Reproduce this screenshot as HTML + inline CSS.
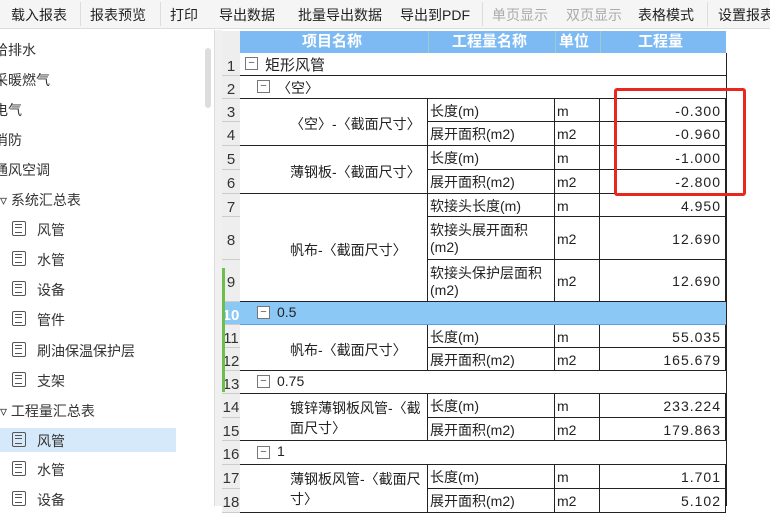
<!DOCTYPE html><html><head><meta charset="utf-8"><style>
*{margin:0;padding:0;box-sizing:border-box}
body{width:770px;height:506px;overflow:hidden;background:#fff;font-family:"Liberation Sans","Noto Sans CJK SC",sans-serif;font-size:14px;color:#222;position:relative}
.a{position:absolute;white-space:nowrap}
.tb{left:0;top:0;width:770px;height:29px;background:#f5f5f5;border-bottom:1px solid #ddd}
.tb span{position:absolute;top:5px;font-size:14px}
.sep{position:absolute;top:2px;width:1px;height:24px;background:#ddd}
.li{position:absolute;font-size:14px;color:#333}
.ic{position:absolute;width:14px;height:15px;border:1.5px solid #555;border-radius:2px}
.ic:after{content:"";position:absolute;left:2px;top:2px;width:7px;height:7px;border-top:1px solid #555;border-bottom:1px solid #555}
.ic:before{content:"";position:absolute;left:2px;top:5px;width:7px;border-top:1px solid #555}
.c{position:absolute;border-right:1px solid #222;border-bottom:1px solid #222;padding-left:2px;font-size:14px;line-height:1.2;overflow:hidden;display:flex;align-items:center;padding-top:2px}
.rn{position:absolute;left:222px;width:18px;background:#eee;border-bottom:1px solid #ccc;text-align:center;font-size:15px;color:#333;padding-top:2px}
.box{position:absolute;width:13px;height:13px;border:1px solid #777;background:#fff;font-size:11px;line-height:10px;text-align:center;color:#555}
.r{justify-content:flex-end;padding-right:4px;letter-spacing:1px}
</style></head><body>
<div class="a tb">
<span style="left:11px">载入报表</span><div class="sep" style="left:80px"></div>
<span style="left:90px">报表预览</span><div class="sep" style="left:160px"></div>
<span style="left:170px">打印</span>
<span style="left:219px">导出数据</span>
<span style="left:298px">批量导出数据</span>
<span style="left:400px">导出到PDF</span><div class="sep" style="left:482px"></div>
<span style="left:492px;color:#aaa">单页显示</span>
<span style="left:566px;color:#aaa">双页显示</span>
<span style="left:638px">表格模式</span><div class="sep" style="left:707px"></div>
<span style="left:718px">设置报表</span>
</div>
<div class="a" style="left:205px;top:48px;width:6px;height:60px;background:#ddd;border-radius:3px"></div>
<div class="a" style="left:214px;top:30px;width:8px;height:476px;background:#f0f0f0;border-left:1px solid #ddd"></div>
<div class="li" style="left:-6px;top:40px">给排水</div>
<div class="li" style="left:-6px;top:70px">采暖燃气</div>
<div class="li" style="left:-6px;top:100px">电气</div>
<div class="li" style="left:-6px;top:130px">消防</div>
<div class="li" style="left:-6px;top:160px">通风空调</div>
<div class="li" style="left:0;top:190px">▿ 系统汇总表</div>
<div class="a" style="left:0;top:428px;width:176px;height:24px;background:#d6e9fb"></div>
<div class="ic" style="left:12px;top:221px"></div><div class="li" style="left:37px;top:220px">风管</div>
<div class="ic" style="left:12px;top:251px"></div><div class="li" style="left:37px;top:250px">水管</div>
<div class="ic" style="left:12px;top:281px"></div><div class="li" style="left:37px;top:280px">设备</div>
<div class="ic" style="left:12px;top:311px"></div><div class="li" style="left:37px;top:310px">管件</div>
<div class="ic" style="left:12px;top:342px"></div><div class="li" style="left:37px;top:341px">刷油保温保护层</div>
<div class="ic" style="left:12px;top:372px"></div><div class="li" style="left:37px;top:371px">支架</div>
<div class="li" style="left:0;top:401px">▿ 工程量汇总表</div>
<div class="ic" style="left:12px;top:432px"></div><div class="li" style="left:37px;top:431px">风管</div>
<div class="ic" style="left:12px;top:461px"></div><div class="li" style="left:37px;top:460px">水管</div>
<div class="ic" style="left:12px;top:491px"></div><div class="li" style="left:37px;top:490px">设备</div>

<div class="a" style="left:222px;top:31px;width:18px;height:22px;background:#eee"></div>
<div class="a" style="left:240px;top:31px;width:486px;height:22px;background:#7db9f2;color:#fff;font-weight:bold;font-size:15px;line-height:22px">
<span class="a" style="left:62px">项目名称</span><span class="a" style="left:212px">工程量名称</span><span class="a" style="left:319px">单位</span><span class="a" style="left:398px">工程量</span>
<div class="a" style="left:188px;top:0;width:1px;height:22px;background:#9cc"></div><div class="a" style="left:315px;width:1px;height:22px;background:#9cc"></div><div class="a" style="left:360px;width:1px;height:22px;background:#9cc"></div>
</div>
<div class="a" style="left:726px;top:53px;width:1px;height:453px;background:#222"></div>

<div class="rn" style="top:53px;height:23px;line-height:23px">1</div>
<div class="rn" style="top:76px;height:23px;line-height:23px">2</div>
<div class="rn" style="top:99px;height:23px;line-height:23px">3</div>
<div class="rn" style="top:122px;height:24px;line-height:24px">4</div>
<div class="rn" style="top:146px;height:24px;line-height:24px">5</div>
<div class="rn" style="top:170px;height:24px;line-height:24px">6</div>
<div class="rn" style="top:194px;height:23px;line-height:23px">7</div>
<div class="rn" style="top:217px;height:43px;line-height:43px">8</div>
<div class="rn" style="top:260px;height:42px;line-height:42px">9</div>
<div class="rn" style="top:302px;height:23px;line-height:23px;background:#8cc8f5;color:#fff;font-weight:bold">10</div>
<div class="rn" style="top:325px;height:23px;line-height:23px">11</div>
<div class="rn" style="top:348px;height:23px;line-height:23px">12</div>
<div class="rn" style="top:371px;height:23px;line-height:23px">13</div>
<div class="rn" style="top:394px;height:24px;line-height:24px">14</div>
<div class="rn" style="top:418px;height:23px;line-height:23px">15</div>
<div class="rn" style="top:441px;height:24px;line-height:24px">16</div>
<div class="rn" style="top:465px;height:24px;line-height:24px">17</div>
<div class="rn" style="top:489px;height:24px;line-height:24px">18</div>
<div class="a" style="left:222px;top:268px;width:3px;height:124px;background:#6cbf4a"></div>

<div class="c" style="left:240px;top:53px;width:486px;height:23px;border-right:0"></div>
<div class="box" style="left:245px;top:57px">−</div><div class="a" style="left:265px;top:54px;font-size:15px">矩形风管</div>
<div class="c" style="left:240px;top:76px;width:486px;height:23px;border-right:0"></div>
<div class="box" style="left:257px;top:80px">−</div><div class="a" style="left:277px;top:78px">〈空〉</div>

<div class="c" style="left:240px;top:99px;width:188px;height:47px"></div>
<div class="a" style="left:290px;top:114px">〈空〉-〈截面尺寸〉</div>
<div class="c" style="left:240px;top:146px;width:188px;height:48px"></div>
<div class="a" style="left:290px;top:162px">薄钢板-〈截面尺寸〉</div>
<div class="c" style="left:240px;top:194px;width:188px;height:108px"></div>
<div class="a" style="left:290px;top:240px">帆布-〈截面尺寸〉</div>

<div class="a" style="left:240px;top:302px;width:486px;height:23px;background:#8cc8f5;border-bottom:1px solid #5aa0e0"></div>
<div class="box" style="left:257px;top:306px">−</div><div class="a" style="left:277px;top:304px">0.5</div>
<div class="c" style="left:240px;top:325px;width:188px;height:46px"></div>
<div class="a" style="left:290px;top:340px">帆布-〈截面尺寸〉</div>
<div class="c" style="left:240px;top:371px;width:486px;height:23px;border-right:0"></div>
<div class="box" style="left:257px;top:375px">−</div><div class="a" style="left:277px;top:373px">0.75</div>
<div class="c" style="left:240px;top:394px;width:188px;height:47px"></div>
<div class="a" style="left:290px;top:399px;line-height:1.4">镀锌薄钢板风管-〈截<br>面尺寸〉</div>
<div class="c" style="left:240px;top:441px;width:486px;height:24px;border-right:0"></div>
<div class="box" style="left:257px;top:446px">−</div><div class="a" style="left:277px;top:443px">1</div>
<div class="c" style="left:240px;top:465px;width:188px;height:48px"></div>
<div class="a" style="left:290px;top:470px;line-height:1.4">薄钢板风管-〈截面尺<br>寸〉</div>

<div class="c" style="left:428px;top:99px;width:127px;height:23px">长度(m)</div><div class="c" style="left:555px;top:99px;width:45px;height:23px">m</div><div class="c r" style="left:600px;top:99px;width:126px;height:23px">-0.300</div>
<div class="c" style="left:428px;top:122px;width:127px;height:24px">展开面积(m2)</div><div class="c" style="left:555px;top:122px;width:45px;height:24px">m2</div><div class="c r" style="left:600px;top:122px;width:126px;height:24px">-0.960</div>
<div class="c" style="left:428px;top:146px;width:127px;height:24px">长度(m)</div><div class="c" style="left:555px;top:146px;width:45px;height:24px">m</div><div class="c r" style="left:600px;top:146px;width:126px;height:24px">-1.000</div>
<div class="c" style="left:428px;top:170px;width:127px;height:24px">展开面积(m2)</div><div class="c" style="left:555px;top:170px;width:45px;height:24px">m2</div><div class="c r" style="left:600px;top:170px;width:126px;height:24px">-2.800</div>
<div class="c" style="left:428px;top:194px;width:127px;height:23px">软接头长度(m)</div><div class="c" style="left:555px;top:194px;width:45px;height:23px">m</div><div class="c r" style="left:600px;top:194px;width:126px;height:23px">4.950</div>
<div class="c" style="left:428px;top:217px;width:127px;height:43px;white-space:normal">软接头展开面积(m2)</div><div class="c" style="left:555px;top:217px;width:45px;height:43px">m2</div><div class="c r" style="left:600px;top:217px;width:126px;height:43px">12.690</div>
<div class="c" style="left:428px;top:260px;width:127px;height:42px;white-space:normal">软接头保护层面积(m2)</div><div class="c" style="left:555px;top:260px;width:45px;height:42px">m2</div><div class="c r" style="left:600px;top:260px;width:126px;height:42px">12.690</div>
<div class="c" style="left:428px;top:325px;width:127px;height:23px">长度(m)</div><div class="c" style="left:555px;top:325px;width:45px;height:23px">m</div><div class="c r" style="left:600px;top:325px;width:126px;height:23px">55.035</div>
<div class="c" style="left:428px;top:348px;width:127px;height:23px">展开面积(m2)</div><div class="c" style="left:555px;top:348px;width:45px;height:23px">m2</div><div class="c r" style="left:600px;top:348px;width:126px;height:23px">165.679</div>
<div class="c" style="left:428px;top:394px;width:127px;height:24px">长度(m)</div><div class="c" style="left:555px;top:394px;width:45px;height:24px">m</div><div class="c r" style="left:600px;top:394px;width:126px;height:24px">233.224</div>
<div class="c" style="left:428px;top:418px;width:127px;height:23px">展开面积(m2)</div><div class="c" style="left:555px;top:418px;width:45px;height:23px">m2</div><div class="c r" style="left:600px;top:418px;width:126px;height:23px">179.863</div>
<div class="c" style="left:428px;top:465px;width:127px;height:24px">长度(m)</div><div class="c" style="left:555px;top:465px;width:45px;height:24px">m</div><div class="c r" style="left:600px;top:465px;width:126px;height:24px">1.701</div>
<div class="c" style="left:428px;top:489px;width:127px;height:24px">展开面积(m2)</div><div class="c" style="left:555px;top:489px;width:45px;height:24px">m2</div><div class="c r" style="left:600px;top:489px;width:126px;height:24px">5.102</div>

<div class="a" style="left:614px;top:88px;width:132px;height:108px;border:3px solid #e8281e;border-radius:3px"></div>
</body></html>
